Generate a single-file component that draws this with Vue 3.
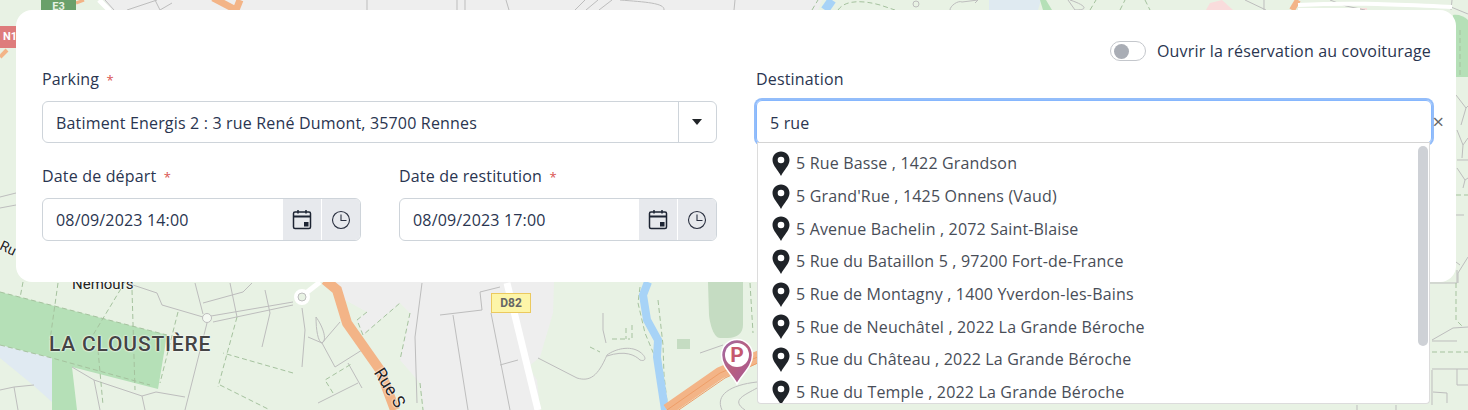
<template>
  <div class="page">
    <svg class="map" width="1468" height="410" viewBox="0 0 1468 410" aria-hidden="true">
      <rect width="1468" height="410" fill="#e8f2e4" />
      <!-- built up areas -->
      <path d="M104 0H822L818 10H112Z" fill="#eeeeee" />
      <path d="M335 282H554L553 313L540 357L528 367L537 380L540 410H424L420 383L400 360L410 313L400 303L363 335L357 320L367 312L345 300Z" fill="#eeeeee" />
      <path d="M1206 10L1210 3L1222 0L1233 10ZM1307 10L1367 8V10Z" fill="#f9dcdc" />
      <path d="M989 0H1041L1038 10H989Z" fill="#dfeaf1" />
      <path d="M1040 0L1046 0L1052 10H1043Z" fill="#b5e0b7" />
      <path d="M1453 15C1458 14 1464 16 1468 20V77H1453Z" fill="#b5e0b7" />
      <!-- parks -->
      <path d="M0 292L167 335L158 389L72 367L77 410H52V358L0 345Z" fill="#b5e0b7" />
      <path d="M0 345L52 358V402L33 385L0 358Z" fill="#e0eaf2" />
      <path d="M708 282H743V325C743 333 737 338 728 338H720C714 338 710 325 709 315Z" fill="#c5dcc2" />
      <rect x="677" y="339" width="13" height="10" fill="#c5dcc2" />
      <!-- street network -->
      <g fill="none" stroke="#bdbdbd" stroke-width="1">
        <path d="M127 283L157 293L162 305L203 317" />
        <path d="M211 316L293 302M213 322L293 305M207 323L185 410" />
        <path d="M195 283L203 314M203 303L243 292L252 283M230 283L237 317" />
        <path d="M265 290L270 313L262 347" />
        <path d="M302 308L305 330L302 367M308 337L322 343L335 367L362 350" />
        <path d="M316 317C322 325 328 340 322 343C318 342 316 330 316 317ZM322 343L340 322" />
        <path d="M348 363L362 388M318 403L358 383" />
        <path d="M72 367L94 380L142 396L156 392L185 397M100 410L94 380M142 396L145 410" />
        <path d="M0 390L14 387L18 410M14 387L34 385" />
        <path d="M422 283L415 337L417 403M440 315L482 310L480 292L500 287M453 315L468 410M491 313L510 410M500 365L518 360" />
        <path d="M538 358L577 378C590 382 598 376 607 355C615 349 630 345 640 352C648 358 645 362 640 360C635 355 625 350 607 356" />
        <path d="M603 313V330L606 343" />
        <path d="M700 353L723 345" />
        <path d="M757 382C730 385 715 395 722 410M757 388C745 395 730 400 745 410" />
        <path d="M1430 283H1457V270M1432 340L1453 328L1468 327M1432 341H1457M1432 369H1468M1432 370V405M1457 369V385H1468M1433 392L1447 393V403" />
        <path d="M1357 405V410M1396 405V410" />
        <path d="M1457 130L1463 145L1462 158M1463 145L1468 138M1457 160H1468M1457 168L1465 180L1463 188M1465 180L1468 178M1468 257L1458 273V283M1460 265L1456 262M1456 215H1464" />
        <path d="M1456 95L1466 108L1461 125M1466 108L1468 106" />
        <path d="M0 197L16 193M0 208L16 205" />
        <path d="M127 10L157 0M155 0L160 10L172 3M105 0L114 10" />
        <path d="M367 0V10M457 0V10M465 0V10M506 0L509 10M575 10L585 0M586 10L598 0M599 10L612 0M620 0C645 2 665 3 664 10M735 0L734 10" />
        <circle cx="916" cy="4" r="3" />
        <path d="M950 10C950 6 958 0 962 2L978 0L975 3M1070 0C1085 5 1090 10 1075 10L1068 0M1245 0L1266 10M1264 10V0M1330 0L1346 6L1365 10M1452 0L1451 10M1451 7L1468 14" />
      </g>
      <circle cx="207" cy="318" r="4.500" fill="#f4f9f2" stroke="#bdbdbd" />
      <g fill="none" stroke="#a5c29e" stroke-width="1" stroke-dasharray="5 3">
        <path d="M0 292L167 335M0 345L52 358L150 385M23 282L20 298M58 283L50 340M125 282L90 340M132 290L135 390M98 350L103 405M178 312L160 383" />
        <path d="M293 373L223 353M237 317L218 387M220 385L270 410M333 393L325 380L353 363M367 312L357 320L363 335L400 303M410 313L400 360M420 383L423 410" />
        <path d="M590 347L600 352M612 339H630M626 328V339M632 325V339" />
        <path d="M640 287L638 303L645 333L655 357L660 380L662 410M658 300L663 345L664 375L668 410M750 283L753 333" />
        <path d="M1456 283V320L1463 327M1432 352H1468M1456 195H1468M812 10L818 0M838 10C845 0 862 0 880 5L895 10" />
        <path d="M1090 10L1096 0M1120 10L1125 0M1145 0L1150 10M1460 30V75" />
      </g>
      <!-- water -->
      <path d="M648 282L643 295L647 320L658 340L657 357L665 410" fill="none" stroke="#a7d3f7" stroke-width="8" />
      <path d="M825 10L832 0" fill="none" stroke="#a7d3f7" stroke-width="9" />
      <!-- main roads -->
      <g fill="none">
        <path d="M325 280L337 290L347 323L380 370L395 410" stroke="#f3b487" stroke-width="10" />
        <path d="M667 410L720 373L760 356" stroke="#f3b487" stroke-width="12" />
        <path d="M667 410L720 373L760 356M670 416L725 378L760 362" stroke="#ee9e68" stroke-width="1" />
        <path d="M213 -2L236 10M240 0L236 10" stroke="#f3b487" stroke-width="7" />
        <path d="M76 3L84 0" stroke="#f3b487" stroke-width="3" />
        <path d="M0 57L7 50" stroke="#f3b487" stroke-width="4" />
        <path d="M1298 0L1292 10" stroke="#f3b487" stroke-width="6" />
        <path d="M507 283L538 410" stroke="#ffffff" stroke-width="7" />
        <path d="M99 0L110 11" stroke="#ffffff" stroke-width="5" />
        <path d="M1298 5C1360 2 1400 5 1452 7M1298 10H1360" stroke="#ffffff" stroke-width="4" />
        <path d="M320 282L306 293" stroke="#ffffff" stroke-width="5" />
        <circle cx="302" cy="297" r="6" stroke="#ffffff" stroke-width="4" />
        <circle cx="302" cy="297" r="4" stroke="#bdbdbd" />
      </g>
    </svg>

    <div class="map-label la">LA CLOUSTIÈRE</div>
    <div class="map-label nem">Nemours</div>
    <div class="map-label rue">Rue S</div>
    <div class="map-label rue-left">Ru</div>
    <div class="shield e3">E3</div>
    <div class="shield n1">N1</div>
    <div class="shield d82">D82</div>

    <svg class="poi" width="36" height="50" viewBox="0 0 36 50" aria-hidden="true">
      <defs>
        <linearGradient id="poi-fill" x1="0" y1="0" x2="1" y2="1">
          <stop offset="0" stop-color="#9c68a8" />
          <stop offset="0.500" stop-color="#b8607f" />
          <stop offset="1" stop-color="#a0559c" />
        </linearGradient>
      </defs>
      <path d="M18 47C13 37 2.500 30 2.500 18A15.500 15.500 0 0 1 33.500 18C33.500 30 23 37 18 47Z" fill="url(#poi-fill)" stroke="#fff" stroke-width="1.500" />
      <circle cx="18" cy="18" r="12" fill="#fff" />
      <text x="18" y="25" text-anchor="middle" class="poi-p">P</text>
    </svg>

    <div class="card">
      <div class="switch-row">
        <span class="switch"><span class="knob"></span></span>
        <span class="switch-label">Ouvrir la réservation au covoiturage</span>
      </div>
      <div class="columns">
        <div class="col">
          <label class="label">Parking <span class="req">*</span></label>
          <div class="select">
            <span class="select-value">Batiment Energis 2 : 3 rue René Dumont, 35700 Rennes</span>
            <span class="caret"></span>
          </div>
          <div class="dates">
            <div v-for="d in dates" :key="d.label" class="date-field">
              <label class="label">{{ d.label }} <span class="req">*</span></label>
              <div class="date-input">
                <span class="date-value">{{ d.value }}</span>
                <span class="addon">
                  <svg width="20" height="21" viewBox="0 0 20 21" fill="none" stroke="#1d2433" stroke-width="1.500">
                    <rect x="1.500" y="3" width="17" height="16.500" rx="1.500" />
                    <path d="M1.500 7.500H18.500" stroke-width="2" />
                    <path d="M6 1V4.500M14 1V4.500" />
                    <rect x="12" y="13" width="4.500" height="4.500" fill="#1d2433" stroke="none" />
                  </svg>
                </span>
                <span class="addon">
                  <svg width="20" height="20" viewBox="0 0 20 20" fill="none" stroke="#2a3040" stroke-width="1.100">
                    <circle cx="10" cy="10" r="8.500" />
                    <path d="M10 4.500V10.500H15.500" />
                  </svg>
                </span>
              </div>
            </div>
          </div>
        </div>
        <div class="col dest">
          <label class="label">Destination</label>
          <div class="input-wrap">
            <div class="dest-input">5 rue</div>
            <span class="clear">×</span>
            <div class="dropdown">
              <div v-for="item in results" :key="item" class="option">
                <svg class="pin" width="18" height="25" viewBox="0 0 18 25">
                  <path fill-rule="evenodd" fill="#1f2328" d="M9 0.500C4 0.500 0.500 4.300 0.500 9C0.500 14.500 6 19 9 25C12 19 17.500 14.500 17.500 9C17.500 4.300 14 0.500 9 0.500ZM9 5.700A3.300 3.300 0 1 1 9 12.300A3.300 3.300 0 1 1 9 5.700Z" />
                </svg>
                <span>{{ item }}</span>
              </div>
              <span class="scrollbar"></span>
            </div>
          </div>
        </div>
      </div>
    </div>
  </div>
</template>

<script setup>
const dates = [
  { label: 'Date de départ', value: '08/09/2023 14:00' },
  { label: 'Date de restitution', value: '08/09/2023 17:00' },
]

const results = [
  '5 Rue Basse , 1422 Grandson',
  "5 Grand'Rue , 1425 Onnens (Vaud)",
  '5 Avenue Bachelin , 2072 Saint-Blaise',
  '5 Rue du Bataillon 5 , 97200 Fort-de-France',
  '5 Rue de Montagny , 1400 Yverdon-les-Bains',
  '5 Rue de Neuchâtel , 2022 La Grande Béroche',
  '5 Rue du Château , 2022 La Grande Béroche',
  '5 Rue du Temple , 2022 La Grande Béroche',
]
</script>

<style>
html, body { margin: 0; overflow: hidden; }
</style>

<style scoped>
.page {
  position: relative;
  width: 1468px;
  height: 410px;
  overflow: hidden;
  padding: 10px 12px 0 16px;
  box-sizing: border-box;
  font-family: "Open Sans", "Noto Sans", sans-serif;
  font-size: 16px;
  letter-spacing: .17px;
  color: #2a3550;
}
.map { position: absolute; left: 0; top: 0; }
.map-label { position: absolute; font-family: Roboto, sans-serif; color: #222; white-space: nowrap; letter-spacing: 0; text-shadow: 0 0 2px #fff, 0 0 2px #fff; }
.la { left: 49px; top: 332px; font-size: 21px; letter-spacing: .8px; color: #444; font-weight: 500; }
.nem { left: 72px; top: 275px; font-size: 15px; }
.rue { left: 387px; top: 364px; font-size: 17px; transform: rotate(58deg); transform-origin: left top; }
.rue-left { left: 0; top: 240px; font-size: 14px; transform: rotate(25deg); }
.shield {
  position: absolute;
  font-family: Roboto, sans-serif;
  font-weight: 700;
  font-size: 11px;
  letter-spacing: 0;
  text-align: center;
  box-sizing: border-box;
}
.e3 { left: 41px; top: 0; width: 35px; height: 10px; background: #6aa06a; color: #e8f2e4; line-height: 14px; overflow: hidden; }
.n1 { left: 0; top: 26px; width: 16px; height: 22px; background: #de7c7c; color: #fff; line-height: 22px; overflow: hidden; text-align: left; padding-left: 3px; }
.d82 { left: 491px; top: 293px; width: 40px; height: 20px; background: #fdf5a8; border: 1px solid #ebc95f; color: #666; font-size: 12px; line-height: 18px; }
.poi { position: absolute; left: 719px; top: 337px; }
.poi-p { font-family: Roboto, sans-serif; font-weight: 700; font-size: 21px; fill: #c6596f; }

.card {
  position: relative;
  height: 272px;
  background: #fff;
  border-radius: 16px;
  padding: 28px 25px 0 26px;
  box-sizing: border-box;
}
.switch-row {
  display: flex;
  justify-content: flex-end;
  align-items: center;
  gap: 11px;
  height: 26px;
}
.switch {
  width: 36px;
  height: 20px;
  box-sizing: border-box;
  border: 1.500px solid #c4c7cc;
  border-radius: 10px;
  display: flex;
  align-items: center;
  padding-left: 3px;
}
.knob { width: 15px; height: 15px; border-radius: 50%; background: #a9adb5; }
.columns { display: grid; grid-template-columns: 675px 676px; column-gap: 39px; margin-top: 4px; }
.label { display: block; line-height: 22px; height: 22px; margin-bottom: 11px; }
.req { color: #d9534f; font-size: 13px; margin-left: 3px; }
.select {
  display: flex;
  align-items: center;
  height: 42px;
  box-sizing: border-box;
  border: 1px solid #ced4da;
  border-radius: 6px;
}
.select-value { flex: 1; padding: 1px 0 0 13px; }
.caret {
  width: 37px;
  height: 100%;
  border-left: 1px solid #ced4da;
  position: relative;
}
.caret::after {
  content: "";
  position: absolute;
  left: 13px;
  top: 17px;
  border-left: 5px solid transparent;
  border-right: 5px solid transparent;
  border-top: 6px solid #212529;
}
.dates { display: grid; grid-template-columns: 319px 318px; column-gap: 38px; margin-top: 22px; }
.date-input {
  display: flex;
  align-items: stretch;
  height: 43px;
  box-sizing: border-box;
  border: 1px solid #ced4da;
  border-radius: 6px;
  overflow: hidden;
}
.date-value { flex: 1; padding: 1px 0 0 13px; line-height: 41px; }
.addon {
  width: 38px;
  background: #e7e9ed;
  display: flex;
  align-items: center;
  justify-content: center;
}
.addon + .addon { border-left: 1px solid #fff; }
.input-wrap { position: relative; }
.dest-input {
  height: 44px;
  margin-top: -1px;
  box-sizing: border-box;
  border: 1px solid #86b7fe;
  box-shadow: 0 0 0 2px #93bdfa;
  border-radius: 6px;
  padding-left: 13px;
  line-height: 44px;
}
.clear { position: absolute; right: -12px; top: 9px; font-size: 20px; line-height: 26px; color: #666; }
.dropdown {
  position: absolute;
  left: 1px;
  right: 2px;
  top: 42px;
  height: 262px;
  overflow: hidden;
  background: #fff;
  border: 1px solid #dcdcdc;
  border-top-color: #d4d4d4;
  border-radius: 0 0 4px 4px;
  box-sizing: border-box;
  padding-top: 4px;
  z-index: 2;
}
.option {
  display: flex;
  align-items: center;
  gap: 6px;
  height: 32.700px;
  padding-left: 14px;
  color: #484d57;
  white-space: nowrap;
}
.pin { flex: none; }
.scrollbar {
  position: absolute;
  right: 1px;
  top: 3px;
  width: 10px;
  height: 200px;
  border-radius: 5px;
  background: #ced1d6;
}
</style>
